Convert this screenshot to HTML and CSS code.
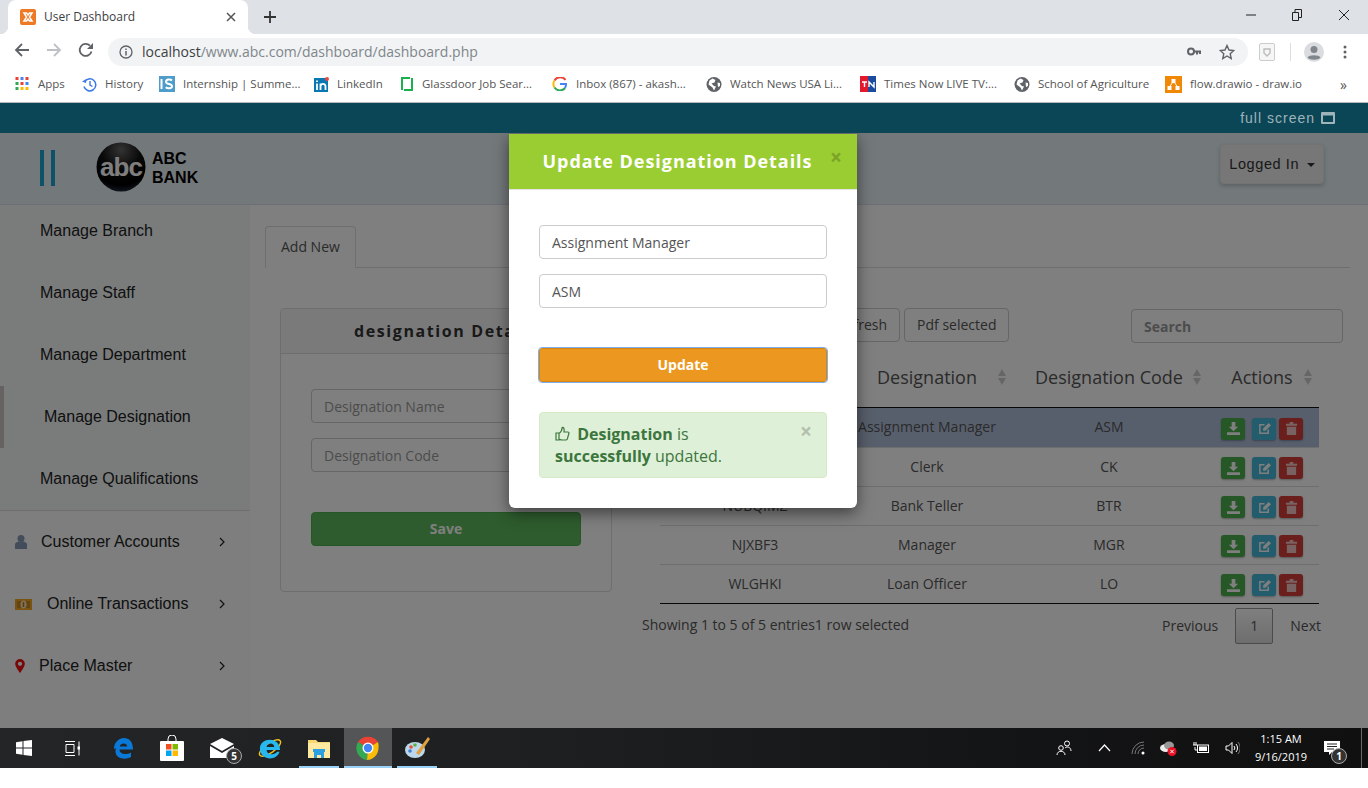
FILE: index.html
```html
<!DOCTYPE html>
<html lang="en">
<head>
	<meta charset="UTF-8">
	<title>User Dashboard</title>
	<link rel="stylesheet" href="styles.css">
</head>
<body>
	<!-- browser window -->
	<div class="tabstrip">
		<div class="tab">
			<svg class="favicon" width="16" height="16" viewBox="0 0 16 16"><rect width="16" height="16" rx="2" fill="#ef7a25"/><path d="M4 4h2.500L8 6l1.500-2H12L9.500 8 12 12H9.500L8 10l-1.500 2H4l2.500-4z" fill="none" stroke="#fff" stroke-width="1.500"/></svg>
			<span class="tab-title">User Dashboard</span>
			<svg class="tab-close" width="10" height="10" viewBox="0 0 10 10"><path d="M1 1l8 8M9 1l-8 8" stroke="#555" stroke-width="1.500"/></svg>
		</div>
		<svg class="tab-new" width="12" height="12" viewBox="0 0 12 12"><path d="M6 0v12M0 6h12" stroke="#333" stroke-width="1.800"/></svg>
		<div class="win-btns">
			<svg width="10" height="10" viewBox="0 0 10 10"><path d="M0 5h10" stroke="#222"/></svg>
			<svg width="10" height="12" viewBox="0 0 10 12"><path d="M.5 3.500h6v8h-6zM3 3.500V.500h6.500v8H6.500" fill="none" stroke="#222"/></svg>
			<svg width="12" height="12" viewBox="0 0 12 12"><path d="M1 1l10 10M11 1L1 11" stroke="#222"/></svg>
		</div>
	</div>

	<div class="toolbar">
		<svg class="nav-icon" width="16" height="16" viewBox="0 0 16 16"><path d="M15 8H2M8 2L2 8l6 6" fill="none" stroke="#5f6368" stroke-width="1.800"/></svg>
		<svg class="nav-icon" width="16" height="16" viewBox="0 0 16 16"><path d="M1 8h13M8 2l6 6-6 6" fill="none" stroke="#bdc1c6" stroke-width="1.800"/></svg>
		<svg class="nav-icon" width="16" height="16" viewBox="0 0 16 16"><path d="M13.500 9.500A6 6 0 1 1 12 3.700" fill="none" stroke="#5f6368" stroke-width="1.800"/><path d="M15 1v6H9z" fill="#5f6368"/></svg>
		<div class="omnibox">
			<svg width="14" height="14" viewBox="0 0 14 14"><circle cx="7" cy="7" r="6" fill="none" stroke="#5f6368" stroke-width="1.300"/><path d="M7 6v4.500M7 3.500v1.500" stroke="#5f6368" stroke-width="1.500"/></svg>
			<span class="url"><b>localhost</b>/www.abc.com/dashboard/dashboard.php</span>
			<svg class="omni-key" width="14" height="10" viewBox="0 0 14 10"><circle cx="4" cy="4.500" r="3" fill="none" stroke="#5f6368" stroke-width="2"/><path d="M7 4.500h7M10 4.500v3M13 4.500v2.500" stroke="#5f6368" stroke-width="2"/></svg>
			<svg class="omni-star" width="16" height="16" viewBox="0 0 16 16"><path d="M8 1.500l2 4.500 4.800.500-3.600 3.200 1 4.800L8 12l-4.200 2.500 1-4.800L1.200 6.500 6 6z" fill="none" stroke="#5f6368" stroke-width="1.400"/></svg>
		</div>
		<div class="extras">
			<svg width="16" height="18" viewBox="0 0 16 18"><rect x=".5" y=".5" width="15" height="17" rx="1.500" fill="#f5f6f6" stroke="#ccc"/><path d="M5 6h6v4l-3 3-3-3z" fill="none" stroke="#bbb" stroke-width="1.400"/></svg>
			<span class="extras-sep"></span>
			<svg width="20" height="20" viewBox="0 0 20 20"><circle cx="10" cy="10" r="10" fill="#dadce0"/><circle cx="10" cy="7.500" r="3.500" fill="#80868b"/><path d="M3.500 15.500c1.500-3 11.500-3 13 0-2 3-11 3-13 0z" fill="#80868b"/></svg>
			<svg width="4" height="14" viewBox="0 0 4 14"><circle cx="2" cy="2" r="1.500" fill="#5f6368"/><circle cx="2" cy="7" r="1.500" fill="#5f6368"/><circle cx="2" cy="12" r="1.500" fill="#5f6368"/></svg>
		</div>
	</div>

	<div class="bookmarks">
		<a class="bm">
			<svg width="15" height="14" viewBox="0 0 14 14"><rect width="3" height="3" fill="#ea4335"/><rect x="5" width="3" height="3" fill="#4285f4"/><rect x="10" width="3" height="3" fill="#ea4335"/><rect y="5" width="3" height="3" fill="#34a853"/><rect x="5" y="5" width="3" height="3" fill="#ea4335"/><rect x="10" y="5" width="3" height="3" fill="#4285f4"/><rect y="10" width="3" height="3" fill="#34a853"/><rect x="5" y="10" width="3" height="3" fill="#fbbc05"/><rect x="10" y="10" width="3" height="3" fill="#fbbc05"/></svg>
			<span>Apps</span>
		</a>
		<a class="bm">
			<svg width="15" height="15" viewBox="0 0 15 15"><path d="M2.500 5A6 6 0 1 1 2 9.500" fill="none" stroke="#3b78e7" stroke-width="1.500"/><path d="M0 4.500l4 1.500 .5-4z" fill="#3b78e7"/><path d="M8 4v4l2.500 1.500" fill="none" stroke="#3b78e7" stroke-width="1.400"/></svg>
			<span>History</span>
		</a>
		<a class="bm">
			<svg width="16" height="16" viewBox="0 0 16 16"><rect width="16" height="16" fill="#4d9cc9"/><path d="M2.500 3v10" stroke="#fff" stroke-width="2"/><path d="M13 4.500c-1.500-1.500-6-1.500-6 1.300 0 3 6 1.500 6 4.500 0 2.500-4.500 2.500-6.300 1" fill="none" stroke="#fff" stroke-width="2"/></svg>
			<span>Internship | Summe...</span>
		</a>
		<a class="bm">
			<svg width="15" height="15" viewBox="0 0 15 15"><rect y="1" width="14" height="14" fill="#0a77b5"/><circle cx="13" cy="2" r="2" fill="#e8483f"/><path d="M3 6.500V13M6.500 13V6.500M6.500 9.500c0-3.500 5-3.500 5 0V13M3 3.500v1.500" fill="none" stroke="#fff" stroke-width="1.800"/></svg>
			<span>LinkedIn</span>
		</a>
		<a class="bm">
			<svg width="14" height="16" viewBox="0 0 12 16"><path d="M1 14V2h8M11 2v12H3" fill="none" stroke="#1ab14c" stroke-width="2"/></svg>
			<span>Glassdoor Job Sear...</span>
		</a>
		<a class="bm">
			<svg width="16" height="14" viewBox="0 0 14 14"><path d="M12.500 3A6.500 6.500 0 0 0 1.500 3.500" fill="none" stroke="#ea4335" stroke-width="2"/><path d="M1.500 3.500a6.500 6.500 0 0 0 0 7" fill="none" stroke="#fbbc05" stroke-width="2"/><path d="M1.500 10.500a6.500 6.500 0 0 0 10.500 .5" fill="none" stroke="#34a853" stroke-width="2"/><path d="M7 7h6a6.500 6.500 0 0 1-1 4" fill="none" stroke="#4285f4" stroke-width="2"/></svg>
			<span>Inbox (867) - akash...</span>
		</a>
		<a class="bm">
			<svg width="16" height="15" viewBox="0 0 15 15"><circle cx="7.500" cy="7.500" r="7.500" fill="#5f6368"/><path d="M6 1.500l3 1.500-1 2.500-3 1 2.500 2.500 2 .5-2 4-1.500-3-4-3 1-4zM11 5.500l2.500 .5 0 3-2 1z" fill="#fff"/></svg>
			<span>Watch News USA Li...</span>
		</a>
		<a class="bm">
			<svg width="16" height="16" viewBox="0 0 16 16"><rect width="8" height="16" fill="#e3182d"/><rect x="8" width="8" height="16" fill="#1c4a9c"/><path d="M2 6h5M4.500 6v5M9 11V6l5 5V6" fill="none" stroke="#fff" stroke-width="1.400"/></svg>
			<span>Times Now LIVE TV:...</span>
		</a>
		<a class="bm">
			<svg width="16" height="15" viewBox="0 0 15 15"><circle cx="7.500" cy="7.500" r="7.500" fill="#5f6368"/><path d="M6 1.500l3 1.500-1 2.500-3 1 2.500 2.500 2 .5-2 4-1.500-3-4-3 1-4zM11 5.500l2.500 .5 0 3-2 1z" fill="#fff"/></svg>
			<span>School of Agriculture</span>
		</a>
		<a class="bm">
			<svg width="17" height="17" viewBox="0 0 17 17"><rect width="17" height="17" fill="#f08705"/><path d="M8.500 5L4.500 11M8.500 5l4 6" stroke="#fff"/><rect x="6.500" y="3" width="4" height="4" fill="#fff"/><rect x="2.500" y="10" width="4" height="4" fill="#fff"/><rect x="10.500" y="10" width="4" height="4" fill="#fff"/></svg>
			<span>flow.drawio - draw.io</span>
		</a>
		<span class="bm-more">»</span>
	</div>

	<!-- the application -->
	<div class="app">
		<div class="topbar">
			<span>full screen</span>
			<svg width="14" height="12" viewBox="0 0 14 12"><rect width="14" height="12" rx="1" fill="#9fb3ba"/><rect x="2" y="3.500" width="10" height="6.500" fill="#0a4656"/></svg>
		</div>

		<header class="header">
			<div class="burger"><i></i><i></i></div>
			<div class="logo">
				<svg width="50" height="50" viewBox="0 0 50 50">
					<defs><radialGradient id="ball" cx=".5" cy=".15" r=".9"><stop offset="0" stop-color="#666"/><stop offset=".45" stop-color="#111"/><stop offset=".8" stop-color="#000"/><stop offset="1" stop-color="#2a3a52"/></radialGradient></defs>
					<circle cx="25" cy="25" r="24.500" fill="url(#ball)"/>
					<text x="25" y="34" text-anchor="middle" class="logo-abc">abc</text>
				</svg>
				<div class="logo-name"><div>ABC</div><div>BANK</div></div>
			</div>
			<button class="logged">Logged In <i class="caret"></i></button>
		</header>

		<div class="layout">
			<aside class="sidebar">
				<ul class="sublist">
					<li>Manage Branch</li>
					<li>Manage Staff</li>
					<li>Manage Department</li>
					<li class="active">Manage Designation</li>
					<li>Manage Qualifications</li>
				</ul>
				<ul class="menu">
					<li class="menu-customer">
						<svg width="12" height="14" viewBox="0 0 12 14"><circle cx="6" cy="3.500" r="3.500" fill="#8499b5"/><path d="M0 14V9.500C0 7.500 2 7 3.500 6.500h5C10 7 12 7.500 12 9.500V14z" fill="#8499b5"/></svg>
						<span>Customer Accounts</span>
						<svg class="chev" width="6" height="10" viewBox="0 0 6 10"><path d="M1 1l4 4-4 4" fill="none" stroke="#222" stroke-width="1.200"/></svg>
					</li>
					<li class="menu-online">
						<svg width="17" height="11" viewBox="0 0 17 11"><rect width="17" height="11" fill="#f5a623"/><rect x="2" y="2" width="13" height="7" fill="#c98a20"/><ellipse cx="8.500" cy="5.500" rx="3" ry="4" fill="#fbe6c0"/><rect x="7.700" y="3" width="1.600" height="5" fill="#c07a10"/></svg>
						<span>Online Transactions</span>
						<svg class="chev" width="6" height="10" viewBox="0 0 6 10"><path d="M1 1l4 4-4 4" fill="none" stroke="#222" stroke-width="1.200"/></svg>
					</li>
					<li class="menu-place">
						<svg width="10" height="14" viewBox="0 0 9 13"><path d="M4.500 0A4.500 4.500 0 0 0 0 4.500C0 7.500 4.500 13 4.500 13S9 7.500 9 4.500A4.500 4.500 0 0 0 4.500 0zm0 6.500a2 2 0 1 1 0-4 2 2 0 0 1 0 4z" fill="#f01010"/></svg>
						<span>Place Master</span>
						<svg class="chev" width="6" height="10" viewBox="0 0 6 10"><path d="M1 1l4 4-4 4" fill="none" stroke="#222" stroke-width="1.200"/></svg>
					</li>
				</ul>
			</aside>

			<main class="main">
				<div class="tabs"><a class="tabs-item">Add New</a></div>
				<div class="columns">
					<section class="panel">
						<h3 class="panel-head">designation Details</h3>
						<div class="panel-body">
							<input class="field" placeholder="Designation Name">
							<input class="field" placeholder="Designation Code">
							<button class="btn-save">Save</button>
						</div>
					</section>

					<section class="records">
						<div class="records-tools">
							<button class="btn-plain">Refresh</button>
							<button class="btn-plain">Pdf selected</button>
							<input class="search" placeholder="Search">
						</div>
						<table class="grid">
							<colgroup><col class="c1"><col class="c2"><col class="c3"><col class="c4"></colgroup>
							<thead>
							<tr>
								<th>Id</th>
								<th>Designation<i class="sort"></i></th>
								<th>Designation Code<i class="sort sort-code"></i></th>
								<th>Actions<i class="sort"></i></th>
							</tr>
							</thead>
							<tbody>
							<tr class="selected">
								<td>KCVZPQ1</td><td>Assignment Manager</td><td>ASM</td>
								<td class="acts"><a class="act green"><svg width="14" height="14" viewBox="0 0 14 14"><path d="M5 0h4v5h3L7 10 2 5h3zM0 11h14v3H0z" fill="#fff"/></svg></a><a class="act blue"><svg width="14" height="14" viewBox="0 0 14 14"><path d="M11 8v4H2V3h5" fill="none" stroke="#fff" stroke-width="1.600"/><path d="M11.500 1L14 3.500 8 9.500H5.500V7z" fill="#fff"/></svg></a><a class="act red"><svg width="12" height="14" viewBox="0 0 12 14"><path d="M0 2h4V0h4v2h4v2H0zM1 5h10v9H1z" fill="#fff"/></svg></a></td>
							</tr>
							<tr>
								<td>P2DXMA7</td><td>Clerk</td><td>CK</td>
								<td class="acts"><a class="act green"><svg width="14" height="14" viewBox="0 0 14 14"><path d="M5 0h4v5h3L7 10 2 5h3zM0 11h14v3H0z" fill="#fff"/></svg></a><a class="act blue"><svg width="14" height="14" viewBox="0 0 14 14"><path d="M11 8v4H2V3h5" fill="none" stroke="#fff" stroke-width="1.600"/><path d="M11.500 1L14 3.500 8 9.500H5.500V7z" fill="#fff"/></svg></a><a class="act red"><svg width="12" height="14" viewBox="0 0 12 14"><path d="M0 2h4V0h4v2h4v2H0zM1 5h10v9H1z" fill="#fff"/></svg></a></td>
							</tr>
							<tr>
								<td>NUBQIMZ</td><td>Bank Teller</td><td>BTR</td>
								<td class="acts"><a class="act green"><svg width="14" height="14" viewBox="0 0 14 14"><path d="M5 0h4v5h3L7 10 2 5h3zM0 11h14v3H0z" fill="#fff"/></svg></a><a class="act blue"><svg width="14" height="14" viewBox="0 0 14 14"><path d="M11 8v4H2V3h5" fill="none" stroke="#fff" stroke-width="1.600"/><path d="M11.500 1L14 3.500 8 9.500H5.500V7z" fill="#fff"/></svg></a><a class="act red"><svg width="12" height="14" viewBox="0 0 12 14"><path d="M0 2h4V0h4v2h4v2H0zM1 5h10v9H1z" fill="#fff"/></svg></a></td>
							</tr>
							<tr>
								<td>NJXBF3</td><td>Manager</td><td>MGR</td>
								<td class="acts"><a class="act green"><svg width="14" height="14" viewBox="0 0 14 14"><path d="M5 0h4v5h3L7 10 2 5h3zM0 11h14v3H0z" fill="#fff"/></svg></a><a class="act blue"><svg width="14" height="14" viewBox="0 0 14 14"><path d="M11 8v4H2V3h5" fill="none" stroke="#fff" stroke-width="1.600"/><path d="M11.500 1L14 3.500 8 9.500H5.500V7z" fill="#fff"/></svg></a><a class="act red"><svg width="12" height="14" viewBox="0 0 12 14"><path d="M0 2h4V0h4v2h4v2H0zM1 5h10v9H1z" fill="#fff"/></svg></a></td>
							</tr>
							<tr>
								<td>WLGHKI</td><td>Loan Officer</td><td>LO</td>
								<td class="acts"><a class="act green"><svg width="14" height="14" viewBox="0 0 14 14"><path d="M5 0h4v5h3L7 10 2 5h3zM0 11h14v3H0z" fill="#fff"/></svg></a><a class="act blue"><svg width="14" height="14" viewBox="0 0 14 14"><path d="M11 8v4H2V3h5" fill="none" stroke="#fff" stroke-width="1.600"/><path d="M11.500 1L14 3.500 8 9.500H5.500V7z" fill="#fff"/></svg></a><a class="act red"><svg width="12" height="14" viewBox="0 0 12 14"><path d="M0 2h4V0h4v2h4v2H0zM1 5h10v9H1z" fill="#fff"/></svg></a></td>
							</tr>
							</tbody>
						</table>
						<div class="records-foot">
							<span class="info">Showing 1 to 5 of 5 entries1 row selected</span>
							<div class="pager">
								<a>Previous</a>
								<a class="pager-now">1</a>
								<a>Next</a>
							</div>
						</div>
					</section>
				</div>
			</main>
		</div>

		<!-- modal sits over a backdrop -->
		<div class="backdrop"></div>
		<div class="modal">
			<div class="modal-head">
				<h4>Update Designation Details</h4>
				<span class="modal-x">×</span>
			</div>
			<div class="modal-body">
				<input class="field" value="Assignment Manager">
				<input class="field" value="ASM">
				<button class="btn-update">Update</button>
				<div class="alert">
					<span class="alert-x">×</span>
					<svg width="15" height="15" viewBox="0 0 15 15"><path d="M1 7h3v7H1zM4 7.500c1.500-1 3-3 3.200-6 1.500-.5 2.300 1 1.800 4.500h3.800c1 0 1.400 1 1 1.800l-1.500 5.200c-.3.700-.8 1-1.500 1H7c-1 0-2-.5-3-.7" fill="none" stroke="#3c763d" stroke-width="1.200"/></svg>
					<b>Designation</b> is<br><b>successfully</b> updated.
				</div>
			</div>
		</div>
	</div>

	<!-- windows taskbar -->
	<div class="taskbar">
		<div class="task task-start"><svg width="16" height="16" viewBox="0 0 16 16"><path d="M0 2.300l6.500-1v6.200H0zM7.500 1.100L16 0v7.500H7.500zM0 8.500h6.500v6.200l-6.500-1zM7.500 8.500H16V16l-8.500-1.100z" fill="#fff"/></svg></div>
		<div class="task task-view"><svg width="16" height="15" viewBox="0 0 16 15"><path d="M1 .5h10M1 14.500h10M2 3.500h8v8H2zM15 .5v14" fill="none" stroke="#fff"/><rect x="13.500" y="5.500" width="2.500" height="3" fill="#fff"/></svg></div>
		<div class="task task-edge"><svg width="20" height="21" viewBox="0 0 20 21"><path d="M1 11C1 4 6 0 11 0c5 0 9 3.500 9 11.500H6.500c0 4.500 6.500 6 11.500 3v4.500c-6 3.500-15 1.500-15.500-5C2.300 11 3.500 9 5 8c-.5 2-2.500 2.500-4 3zM6.800 8.500h7.400c0-4-7-4-7.400 0z" fill="#0a78d7"/></svg></div>
		<div class="task task-store"><svg width="24" height="26" viewBox="0 0 24 26"><path d="M8 7V4a4 4 0 0 1 8 0v3" fill="none" stroke="#fff"/><rect y="6" width="24" height="20" rx="1" fill="#fff"/><rect x="6" y="9" width="5.500" height="5.500" fill="#f25022"/><rect x="12.500" y="9" width="5.500" height="5.500" fill="#7fba00"/><rect x="6" y="15.500" width="5.500" height="5.500" fill="#00a4ef"/><rect x="12.500" y="15.500" width="5.500" height="5.500" fill="#ffb900"/></svg></div>
		<div class="task task-mail"><svg width="24" height="20" viewBox="0 0 24 20"><path d="M0 6l12-6 12 6L12 13z" fill="#fff"/><path d="M0 8l12 7 12-7v12H0z" fill="#fff"/></svg><span class="task-badge">5</span></div>
		<div class="task task-ie"><svg width="24" height="24" viewBox="-1 -1 25 25"><ellipse cx="11.500" cy="11.500" rx="13" ry="5" transform="rotate(-35 11.500 11.500)" fill="none" stroke="#f0c020" stroke-width="1.500"/><path d="M1 12C1 0 22-1 22 13.500H8c0 5 8 6 11 2h2.500C18 26 1 24 1 12zm7-1.500h8c0-5-8-5-8 0z" fill="#26b8ef"/></svg></div>
		<div class="task task-files on"><svg width="22" height="20" viewBox="0 0 22 20"><path d="M0 2h8l2 2h12v16H0z" fill="#f7d774"/><rect y="5" width="22" height="15" fill="#ffe9a0"/><path d="M6 14h10v6h-3v-3H9v3H6z" fill="#2b9fe0"/><rect x="5" y="11" width="12" height="3" fill="#2b9fe0"/></svg></div>
		<div class="task task-chrome on"><svg width="24" height="24" viewBox="0 0 24 24"><path d="M12 12L2 6a12 12 0 0 1 20 0z" fill="#ea4335"/><path d="M12 12L2 6a12 12 0 0 0 9 18z" fill="#34a853"/><path d="M12 12h10.500a12 12 0 0 1-11.500 12z" fill="#fbbc05"/><path d="M22 6a12 12 0 0 1 .5 6H12z" fill="#fbbc05"/><circle cx="12" cy="12" r="5.500" fill="#fff"/><circle cx="12" cy="12" r="4.200" fill="#4285f4"/></svg></div>
		<div class="task task-paint on"><svg width="25" height="24" viewBox="0 0 25 24"><ellipse cx="10" cy="14" rx="10" ry="8" fill="#bcd8ea"/><circle cx="6" cy="11" r="1.800" fill="#e05040"/><circle cx="10" cy="9" r="1.800" fill="#60b040"/><circle cx="5" cy="15" r="1.800" fill="#4080d0"/><path d="M23 1l2 2-11 16-3-2z" fill="#e0a040"/></svg></div>

		<div class="tray">
			<svg class="t-people" width="16" height="16" viewBox="0 0 16 16"><circle cx="5" cy="8" r="2.300" fill="none" stroke="#fff"/><circle cx="11" cy="3.500" r="2.500" fill="none" stroke="#fff"/><path d="M1 15c0-5 8-5 8 0M9 8c2-2 6-1 6 3" fill="none" stroke="#fff"/></svg>
			<svg class="t-chev" width="13" height="8" viewBox="0 0 13 8"><path d="M1 7l5.500-6L12 7" fill="none" stroke="#fff" stroke-width="1.200"/></svg>
			<svg class="t-wifi" width="14" height="14" viewBox="0 0 14 14"><path d="M1 13A12 12 0 0 1 13 1M4 13a9 9 0 0 1 9-9M7 13a6 6 0 0 1 6-6" fill="none" stroke="#777"/><circle cx="12" cy="12" r="1.500" fill="#fff"/></svg>
			<svg class="t-cloud" width="17" height="15" viewBox="0 0 17 15"><ellipse cx="6" cy="7" rx="6" ry="4" fill="#eee"/><ellipse cx="9" cy="4.500" rx="5" ry="4" fill="#999"/><circle cx="12" cy="10.500" r="4.500" fill="#e81123"/><path d="M10.300 8.800l3.400 3.400M13.700 8.800l-3.400 3.400" stroke="#fff"/></svg>
			<svg class="t-batt" width="16" height="12" viewBox="0 0 16 12"><rect x="4.500" y="3" width="11" height="7.500" fill="none" stroke="#fff"/><rect x="6" y="4.500" width="8" height="4.500" fill="#fff"/><path d="M0 3h4M1 0v3M3 0v3M2 5v3h3" fill="none" stroke="#fff"/></svg>
			<svg class="t-sound" width="15" height="14" viewBox="0 0 15 14"><path d="M1 5h2.500L7 1.500v11L3.500 9H1z" fill="none" stroke="#fff"/><path d="M9 5a3 3 0 0 1 0 4M11 3a6 6 0 0 1 0 8" fill="none" stroke="#fff"/><path d="M13 1a9 9 0 0 1 0 12" fill="none" stroke="#777"/></svg>
			<div class="clock">1:15 AM<br>9/16/2019</div>
			<div class="notify"><svg width="16" height="14" viewBox="0 0 16 14"><path d="M0 0h16v11H8l-3 3v-3H0z" fill="#fff"/><path d="M3 3h10M3 5.500h10M3 8h7" stroke="#222"/></svg><span class="task-badge">1</span></div>
			<span class="show-desktop"></span>
		</div>
	</div>
</body>
</html>
```

FILE: styles.css
```css
* {
	margin: 0;
	padding: 0;
	box-sizing: border-box;
}
body {
	background: #fff;
	font: 14px "Open Sans", sans-serif;
	color: #555;
	height: 788px;
	overflow: hidden;
}
ul {
	list-style: none;
}
svg {
	display: block;
	flex: none;
}
button,
input {
	font-family: "Open Sans", sans-serif;
}

/* browser */
.tabstrip {
	height: 34px;
	background: #dee1e6;
	display: flex;
	align-items: flex-end;
	padding-left: 8px;
}
.tab {
	position: relative;
	width: 240px;
	height: 34px;
	background: #fff;
	border-radius: 8px 8px 0 0;
	display: flex;
	align-items: center;
	padding: 0 0 0 12px;
	font-size: 12px;
	color: #3c4043;
}
.tab::before,
.tab::after {
	content: "";
	position: absolute;
	bottom: 0;
	width: 8px;
	height: 8px;
}
.tab::before {
	left: -8px;
	background: radial-gradient(circle at 0 0, #dee1e6 8px, #fff 8.500px);
}
.tab::after {
	right: -8px;
	background: radial-gradient(circle at 100% 0, #dee1e6 8px, #fff 8.500px);
}
.tab-title {
	margin: 0 0 2px 8px;
}
.tab-close {
	margin-left: auto;
	margin-right: 12px;
}
.tab-new {
	margin: 0 0 11px 16px;
}
.win-btns {
	margin-left: auto;
	height: 30px;
	display: flex;
	align-items: center;
	gap: 36px;
	padding: 0 18px 0 0;
	margin-bottom: 4px;
}
.toolbar {
	height: 32px;
	background: #fff;
	display: flex;
	align-items: center;
	padding-left: 14px;
	gap: 16px;
}
.omnibox {
	width: 1140px;
	height: 28px;
	margin: 4px 0 0 -2px;
	background: #f1f3f4;
	border-radius: 14px;
	display: flex;
	align-items: center;
	padding: 0 13px 0 11px;
	color: #80868b;
	font-size: 14px;
}
.url {
	margin: 0 0 1px 9px;
}
.url b {
	font-weight: 400;
	color: #3c4043;
}
.omni-key {
	margin-left: auto;
}
.omni-star {
	margin-left: 18px;
}
.extras {
	display: flex;
	align-items: center;
	margin: 4px 0 0 -5px;
	gap: 13px;
}
.extras-sep {
	width: 1px;
	height: 18px;
	margin-left: 2px;
	background: #ddd;
}
.extras svg:last-child {
	margin-left: 6px;
}
.bookmarks {
	height: 37px;
	background: #fff;
	border-bottom: 1px solid #b8babd;
	display: grid;
	grid-template-columns: 67px 77px 155px 86px 152px 154px 154px 154px 151px 175px 20px;
	align-items: center;
	padding-left: 15px;
	font-size: 11.500px;
	color: #555;
}
.bm {
	display: flex;
	align-items: center;
	gap: 8px;
	white-space: nowrap;
}
.bm span {
	margin-bottom: 2px;
}
.bm-more {
	font-size: 14px;
	color: #555;
}

/* application */
.app {
	position: relative;
	height: 625px;
	overflow: hidden;
}
.topbar {
	position: relative;
	z-index: 3;
	height: 30px;
	background: #0a4656;
	color: #9fb3ba;
	font: 14px "Liberation Sans", Arial, sans-serif;
	letter-spacing: 1px;
	display: flex;
	justify-content: flex-end;
	align-items: center;
	gap: 6px;
	padding-right: 33px;
}
.header {
	height: 72px;
	background: #e6f0f4;
	border-bottom: 1px solid #dde;
	display: flex;
	align-items: center;
	padding-left: 40px;
}
.burger {
	display: flex;
	gap: 7px;
	margin-top: -2px;
}
.burger i {
	width: 4px;
	height: 36px;
	background: #1aa5cc;
}
.logo {
	display: flex;
	align-items: center;
	margin: -4px 0 0 41px;
	gap: 6px;
}
.logo-abc {
	font: bold 26px "Liberation Sans", Arial, sans-serif;
	fill: #fff;
	letter-spacing: -1px;
}
.logo-name {
	font: bold 16px/19px "Liberation Sans", Arial, sans-serif;
	color: #000;
	padding-top: 3px;
}
.logged {
	margin: -10px 44px 0 auto;
	width: 104px;
	height: 40px;
	background: #eee;
	border: 1px solid #e6e6e6;
	border-radius: 4px;
	box-shadow: 0 2px 4px rgba(0, 0, 0, .2);
	font: 14.500px "Liberation Sans", Arial, sans-serif;
	letter-spacing: .6px;
	color: #333;
}
.caret {
	display: inline-block;
	margin-left: 3px;
	vertical-align: middle;
	border-top: 4px solid #333;
	border-left: 4px solid transparent;
	border-right: 4px solid transparent;
}
.layout {
	display: flex;
	height: 523px;
}

/* sidebar */
.sidebar {
	width: 250px;
	background: #fcfcfc;
	font: 16px "Liberation Sans", Arial, sans-serif;
	color: #222;
}
.sublist {
	height: 306px;
	background: #f4f8f8;
	border-bottom: 1px solid #ddd;
}
.sublist li {
	position: relative;
	height: 62px;
	padding: 17px 0 0 40px;
	line-height: 18px;
}
.sublist .active {
	padding-left: 44px;
}
.sublist .active::before {
	content: "";
	position: absolute;
	left: 0;
	top: -5px;
	width: 4px;
	height: 62px;
	background: #cfc4c4;
}
.menu li {
	height: 62px;
	display: flex;
	align-items: center;
	padding-left: 15px;
}
.menu .chev {
	margin-left: auto;
	margin-right: 25px;
}
.menu-customer span {
	margin-left: 14px;
}
.menu-online span {
	margin-left: 15px;
}
.menu-place span {
	margin-left: 14px;
}

/* main */
.main {
	flex: 1;
	background: #fff;
	padding: 21px 0 0 15px;
}
.tabs {
	height: 42px;
	border-bottom: 1px solid #ddd;
	margin-right: 18px;
}
.tabs-item {
	display: block;
	width: 91px;
	height: 42px;
	background: #fff;
	border: 1px solid #ddd;
	border-bottom-color: #fff;
	border-radius: 4px 4px 0 0;
	padding: 10px 15px;
	line-height: 20px;
}
.columns {
	display: flex;
	padding: 40px 0 0 15px;
	gap: 30px;
}
.panel {
	width: 332px;
	height: 284px;
	border: 1px solid #ddd;
	border-radius: 4px;
}
.panel-head {
	height: 45px;
	background: #f5f5f5;
	border-bottom: 1px solid #ddd;
	border-radius: 3px 3px 0 0;
	text-align: center;
	font-size: 16px;
	line-height: 44px;
	letter-spacing: 1.600px;
	color: #333;
}
.panel-body {
	padding: 35px 30px 0;
}
.field {
	display: block;
	width: 100%;
	height: 34px;
	border: 1px solid #ccc;
	border-radius: 4px;
	padding: 0 12px;
	font-size: 14px;
	color: #555;
	margin-bottom: 15px;
	background: #fff;
}
.field::placeholder,
.search::placeholder {
	color: #999;
}
.btn-save {
	display: block;
	width: 100%;
	height: 34px;
	margin-top: 40px;
	padding-bottom: 2px;
	background: #5cb85c;
	border: 1px solid #4cae4c;
	border-radius: 4px;
	color: #fff;
	font-size: 14px;
	font-weight: 700;
}
.records {
	width: 701px;
}
.records-tools {
	display: flex;
	padding-left: 182px;
	gap: 4px;
}
.btn-plain {
	height: 34px;
	background: #fff;
	border: 1px solid #ccc;
	border-radius: 4px;
	padding: 0 12px 2px;
	font-size: 14px;
	color: #555;
}
.search {
	width: 212px;
	height: 34px;
	margin: 1px 0 0 auto;
	border: 1px solid #ccc;
	border-radius: 4px;
	padding: 0 12px;
	font-size: 14px;
	font-weight: 700;
}
.grid {
	width: 659px;
	margin: 4px 0 0 18px;
	table-layout: fixed;
	border-collapse: separate;
	border-spacing: 0;
	border-bottom: 1px solid #111;
}
.c1 { width: 181px; }
.c2 { width: 172px; }
.c3 { width: 192px; }
.c4 { width: 114px; }
.grid th {
	position: relative;
	height: 61px;
	border-bottom: 1px solid #111;
	font-size: 18px;
	font-weight: 400;
	padding-bottom: 1px;
	white-space: nowrap;
}
.grid td {
	height: 39px;
	padding-bottom: 2px;
	text-align: center;
	border-top: 1px solid #ddd;
}
.grid tr:first-child td {
	border-top: 0;
}
.grid td:first-child {
	padding-left: 9px;
}
.grid .selected td {
	background: #b0bed9;
}
.sort {
	position: absolute;
	right: 7px;
	top: 22px;
	width: 8px;
	height: 16px;
}
.sort-code {
	right: 4px;
}
.sort::before,
.sort::after {
	content: "";
	position: absolute;
	left: 0;
	border-left: 4px solid transparent;
	border-right: 4px solid transparent;
}
.sort::before {
	top: 0;
	border-bottom: 7px solid #ccc;
}
.sort::after {
	bottom: 0;
	border-top: 7px solid #ccc;
}
.grid .acts {
	text-align: left;
	padding: 0 0 0 16px;
	white-space: nowrap;
	font-size: 0;
}
.act {
	display: inline-flex;
	align-items: center;
	justify-content: center;
	width: 24px;
	height: 22px;
	border-radius: 3px;
	box-shadow: 0 1px 2px rgba(0, 0, 0, .3);
	margin: 2px 3px 0 0;
	vertical-align: middle;
}
.act svg {
	width: 13px;
	height: 13px;
}
.green {
	background: #4cae4c;
	margin-right: 7px;
}
.blue {
	background: #46b8da;
}
.red {
	background: #d43f3a;
}
.red svg {
	opacity: .7;
}
.records-foot {
	display: flex;
	justify-content: space-between;
	margin-top: 4px;
	padding-right: 22px;
}
.info {
	margin-top: 7px;
}
.pager {
	display: flex;
	align-items: center;
	gap: 17px;
	height: 36px;
}
.pager a {
	line-height: 20px;
}
.pager-now {
	width: 38px;
	height: 36px;
	line-height: 34px !important;
	text-align: center;
	border: 1px solid #979797;
	border-radius: 2px;
	background: linear-gradient(#fff, #dcdcdc);
}

/* modal */
.backdrop {
	position: absolute;
	z-index: 1;
	left: 0;
	right: 0;
	top: 30px;
	bottom: 0;
	background: rgba(0, 0, 0, .5);
}
.modal {
	position: absolute;
	z-index: 2;
	left: 509px;
	top: 31px;
	width: 348px;
	height: 374px;
	background: #fff;
	border-radius: 0 0 6px 6px;
	box-shadow: 0 5px 15px rgba(0, 0, 0, .5);
}
.modal-head {
	position: relative;
	height: 56px;
	background: #9acd32;
	border-bottom: 1px solid #e5e5e5;
	text-align: center;
}
.modal-head h4 {
	font-size: 18px;
	line-height: 55px;
	letter-spacing: .95px;
	color: #fff;
	padding-right: 11px;
}
.modal-x {
	position: absolute;
	right: 15px;
	top: 12px;
	font-size: 21px;
	line-height: 22px;
	font-weight: 700;
	color: #000;
	opacity: .2;
}
.modal-body {
	padding: 35px 30px 0;
}
.btn-update {
	display: block;
	width: 100%;
	height: 34px;
	margin-top: 40px;
	padding-bottom: 2px;
	background: #ec971f;
	border: 1px solid #d58512;
	outline: 1px solid #7faee8;
	border-radius: 3px;
	color: #fff;
	font-size: 14px;
	font-weight: 700;
}
.alert {
	position: relative;
	height: 66px;
	margin-top: 30px;
	padding: 10px 15px;
	background: #dff0d8;
	border: 1px solid #d6e9c6;
	border-radius: 4px;
	color: #3c763d;
	font-size: 16px;
	line-height: 22px;
}
.alert svg {
	display: inline-block;
	vertical-align: -1px;
	margin-right: 3px;
}
.alert-x {
	position: absolute;
	right: 14px;
	top: 7px;
	font-size: 21px;
	font-weight: 700;
	color: #000;
	opacity: .2;
}

/* taskbar */
.taskbar {
	height: 40px;
	background: linear-gradient(90deg, #232527, #1d1f20 40%, #131415 75%, #101010);
	display: flex;
	color: #fff;
}
.task {
	position: relative;
	width: 48px;
	height: 40px;
	display: flex;
	align-items: center;
	justify-content: center;
}
.task.on::after {
	content: "";
	position: absolute;
	left: 0;
	right: 0;
	bottom: 0;
	height: 2px;
	background: #99d1f7;
}
.task-edge { margin-left: 3px; }
.task-store { margin-left: 1px; }
.task-mail { margin-left: 2px; }
.task-files.on {
	width: 40px;
	margin-left: 5px;
}
.task-chrome.on {
	background: #535556;
	margin-left: 5px;
}
.task-paint.on {
	width: 40px;
	margin-left: 5px;
}
.task-badge {
	position: absolute;
	width: 16px;
	height: 16px;
	border-radius: 50%;
	background: #333;
	border: 1px solid #aaa;
	font-size: 10px;
	font-weight: 700;
	line-height: 14px;
	text-align: center;
	color: #fff;
}
.task-mail .task-badge {
	right: 4px;
	bottom: 4px;
}
.tray {
	flex: 1;
	display: flex;
	align-items: center;
	justify-content: flex-end;
}
.t-people { margin-right: 26px; }
.t-chev { margin-right: 20px; }
.t-wifi { margin-right: 15px; }
.t-cloud { margin-right: 16px; }
.t-batt { margin-right: 16px; }
.t-sound { margin-right: 11px; }
.clock {
	width: 60px;
	text-align: center;
	font-size: 11px;
	line-height: 18px;
}
.notify {
	position: relative;
	margin: 0 21px 0 13px;
}
.notify .task-badge {
	left: 7px;
	top: 7px;
}
.show-desktop {
	width: 1px;
	height: 40px;
	background: #666;
	margin: 0 6px 0 0;
}
```
